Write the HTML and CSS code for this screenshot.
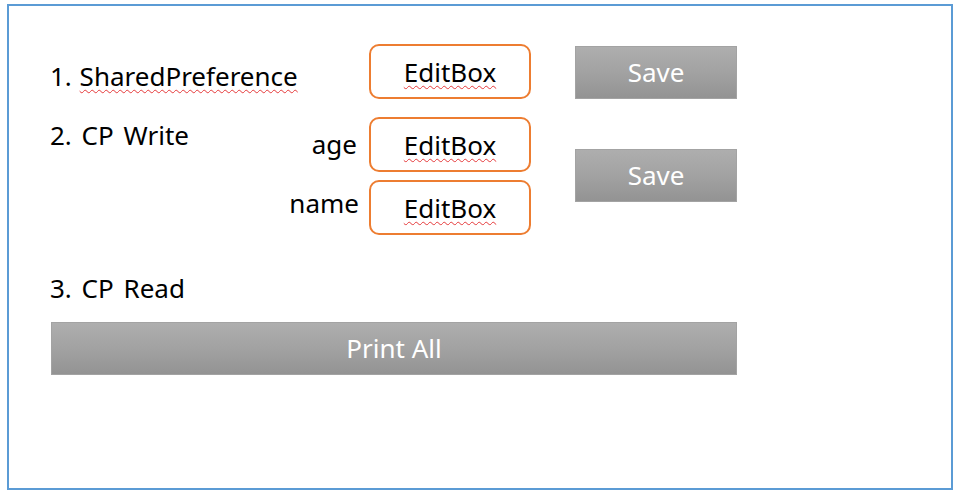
FILE: index.html
```html
<!DOCTYPE html>
<html lang="ko">
<head>
<meta charset="utf-8">
<title>Content Provider</title>
<link rel="stylesheet" href="styles.css">
</head>
<body>
<div class="slide">
  <div class="form">
    <div class="title t1">1. <span class="sp">SharedPreference</span></div>
    <div class="edit e1"><span class="sp">EditBox</span></div>
    <div class="btn s1">Save</div>
    <div class="title t2">2. CP Write</div>
    <div class="sub age">age</div>
    <div class="edit e2"><span class="sp">EditBox</span></div>
    <div class="sub name">name</div>
    <div class="edit e3"><span class="sp">EditBox</span></div>
    <div class="btn s2">Save</div>
  </div>
  <div class="title t3">3. CP Read</div>
  <div class="btn print">Print All</div>
</div>
</body>
</html>
```

FILE: styles.css
```css
html, body {
  margin: 0;
  padding: 0;
  background: #ffffff;
}
body {
  font-family: "Noto Sans", "Open Sans", "Noto Sans CJK KR", sans-serif;
  font-size: 26px;
  color: #000000;
}
.slide {
  box-sizing: border-box;
  width: 946px;
  height: 486px;
  margin: 4px 0 0 7px;
  border: 2px solid #5b9bd5;
  padding: 38px 0 0 41px;
}
.form {
  display: grid;
  grid-template-columns: 230px 79px 10px 162px 44px 162px;
  grid-template-rows: 55px 18px 55px 8px 55px;
}
.title {
  line-height: 36px;
  white-space: nowrap;
  word-spacing: 3px;
}
.t1 {
  grid-column: 1 / 3;
  grid-row: 1;
  margin-top: 14px;
  word-spacing: 1px;
}
.t2 {
  grid-column: 1;
  grid-row: 3;
}
.t3 {
  margin-top: 35px;
}
.sp {
  text-decoration: underline wavy #e5393a;
  text-decoration-thickness: 1px;
  text-underline-offset: 3px;
  text-decoration-skip-ink: none;
}
.sub {
  grid-column: 2;
  text-align: right;
  line-height: 36px;
  align-self: start;
}
.age {
  grid-row: 3;
  margin-top: 9px;
  padding-right: 2px;
}
.name {
  grid-row: 5;
  margin-top: 5px;
  padding-right: 0;
}
.edit {
  grid-column: 4;
  box-sizing: border-box;
  border: 2px solid #ed7d31;
  border-radius: 10px;
  display: flex;
  align-items: center;
  justify-content: center;
  line-height: 36px;
  background: #ffffff;
}
.e1 { grid-row: 1; }
.e2 { grid-row: 3; }
.e3 { grid-row: 5; }
.btn {
  box-sizing: border-box;
  height: 53px;
  display: flex;
  align-items: center;
  justify-content: center;
  padding-bottom: 2px;
  color: #ffffff;
  line-height: 36px;
  border: 1px solid #a3a3a3;
  background: linear-gradient(to bottom, #aeaeae 0%, #a2a2a2 50%, #939393 100%);
}
.s1 {
  grid-column: 6;
  grid-row: 1;
  margin-top: 2px;
}
.s2 {
  grid-column: 6;
  grid-row: 3 / 6;
  align-self: center;
  margin-top: -1px;
}
.print {
  width: 686px;
  margin: 16px 0 0 1px;
}
```
